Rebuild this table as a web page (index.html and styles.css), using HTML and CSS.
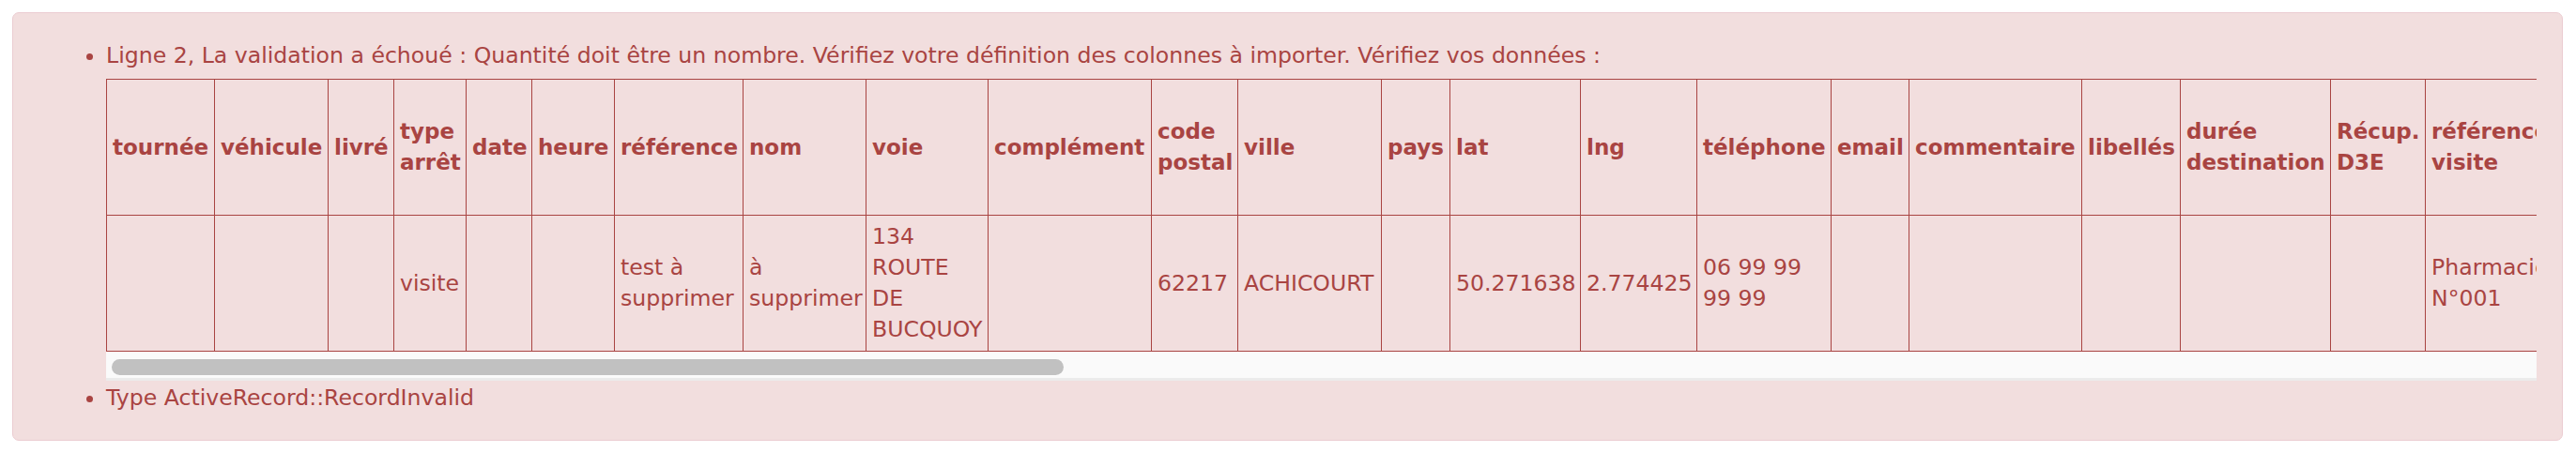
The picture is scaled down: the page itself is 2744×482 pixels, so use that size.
FILE: index.html
```html
<!DOCTYPE html>
<html lang="fr">
<head>
<meta charset="utf-8">
<title>Import</title>
<link rel="stylesheet" href="styles.css">
</head>
<body>
<div class="alert">
  <ul class="errors">
    <li>Ligne 2, La validation a échoué : Quantité doit être un nombre. Vérifiez votre définition des colonnes à importer. Vérifiez vos données :
      <div class="table-wrap">
        <table class="data">
          <colgroup>
            <col class="w115"><col class="w121"><col class="w70"><col class="w77"><col class="w70"><col class="w88"><col class="w137"><col class="w131"><col class="w130"><col class="w174"><col class="w92"><col class="w153"><col class="w73"><col class="w139"><col class="w124"><col class="w143"><col class="w83"><col class="w184"><col class="w105"><col class="w160"><col class="w101"><col class="w150">
          </colgroup>
          <thead>
            <tr class="head-row">
              <th>tournée</th><th>véhicule</th><th>livré</th><th>type arrêt</th><th>date</th><th>heure</th><th>référence</th><th>nom</th><th>voie</th><th>complément</th><th>code postal</th><th>ville</th><th>pays</th><th>lat</th><th>lng</th><th>téléphone</th><th>email</th><th>commentaire</th><th>libellés</th><th>durée destination</th><th>Récup. D3E</th><th>référence visite</th>
            </tr>
          </thead>
          <tbody>
            <tr>
              <td></td><td></td><td></td><td>visite</td><td></td><td></td><td>test à supprimer</td><td>à supprimer</td><td>134 ROUTE DE BUCQUOY</td><td></td><td>62217</td><td>ACHICOURT</td><td></td><td>50.271638</td><td>2.774425</td><td>06 99 99 99 99</td><td></td><td></td><td></td><td></td><td></td><td>Pharmacie N°001</td>
            </tr>
          </tbody>
        </table>
      </div>
      <div class="scrollbar"><div class="thumb"></div></div>
    </li>
    <li class="last">Type ActiveRecord::RecordInvalid</li>
  </ul>
</div>
</body>
</html>
```

FILE: styles.css
```css
html, body {
  background: #ffffff;
}
body {
  margin: 13px 14px 13px 13px;
  font-family: "DejaVu Sans", Verdana, sans-serif;
  font-size: 23.6px;
  line-height: 33px;
  color: #a94442;
}
.alert {
  background: #f2dede;
  border: 1px solid #ebccd1;
  border-radius: 7px;
  padding: 29px 27px 28px 27px;
}
.errors {
  margin: 0;
  padding: 0 0 0 72px;
}
.last {
  margin-top: 2px;
}
.table-wrap {
  margin-top: 8px;
  overflow: hidden;
}
.data {
  border-collapse: collapse;
  table-layout: fixed;
  width: 2620px;
}
.data th,
.data td {
  border: 1px solid #a94442;
  padding: 6px 6px;
  vertical-align: middle;
  text-align: left;
}
.data th {
  font-weight: bold;
  font-size: 23px;
}
.head-row {
  height: 145px;
}
.scrollbar {
  box-sizing: border-box;
  height: 31px;
  padding-top: 8px;
  background: #fafafa;
  border-bottom: 3px solid #ebebeb;
}
.thumb {
  width: 1014px;
  height: 17px;
  margin-left: 6px;
  border-radius: 9px;
  background: #c1c1c1;
}
.w70 { width: 70px; }
.w73 { width: 73px; }
.w77 { width: 77px; }
.w83 { width: 83px; }
.w88 { width: 88px; }
.w92 { width: 92px; }
.w101 { width: 101px; }
.w105 { width: 105px; }
.w115 { width: 115px; }
.w121 { width: 121px; }
.w124 { width: 124px; }
.w130 { width: 130px; }
.w131 { width: 131px; }
.w137 { width: 137px; }
.w139 { width: 139px; }
.w143 { width: 143px; }
.w150 { width: 150px; }
.w153 { width: 153px; }
.w160 { width: 160px; }
.w174 { width: 174px; }
.w184 { width: 184px; }
```
